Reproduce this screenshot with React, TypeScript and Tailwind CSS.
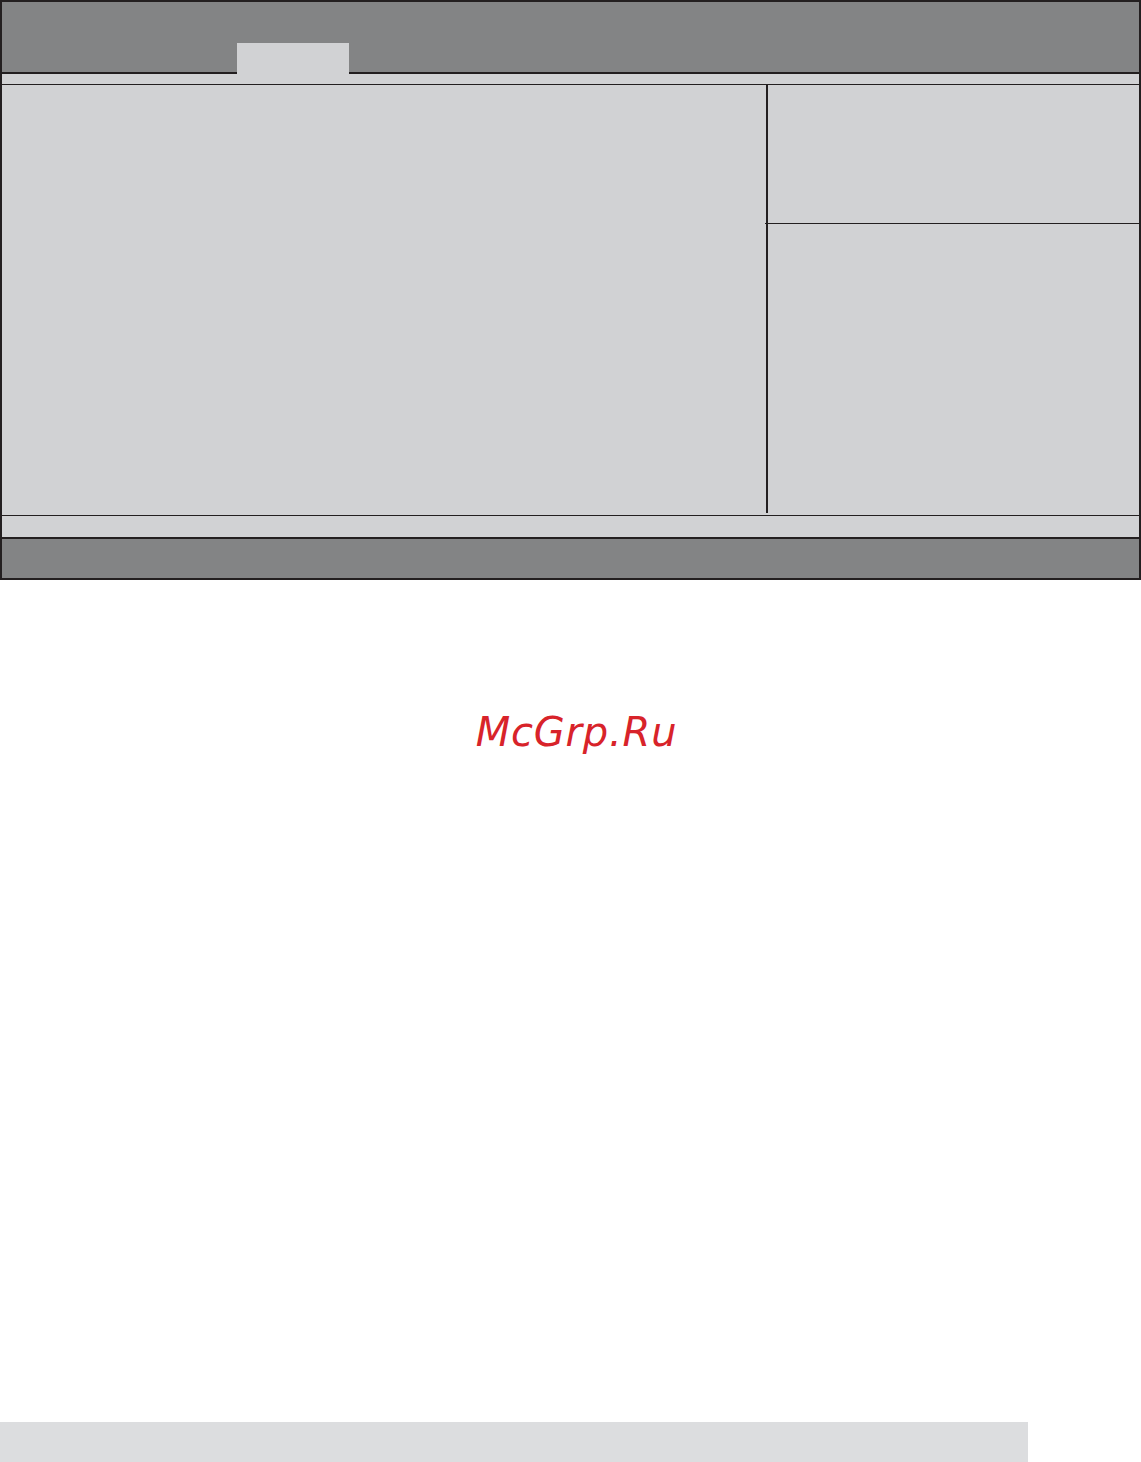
// BIOS setup screen frame (empty template) with watermark and footer bar.
const DARK = 'border-[#231f20]';

function Header() {
    return (
        <div className="flex h-[72px] bg-[#838485]">
            <div className={`w-[235px] border-b-2 ${DARK}`} />
            <div className="self-end h-[31px] w-[112px] bg-[#d1d2d4]" />
            <div className={`flex-1 border-b-2 ${DARK}`} />
        </div>
    );
}

function Body() {
    return (
        <div className="flex h-[430px] bg-[#d1d2d4]">
            <div className="w-[764px]" />
            <div className="w-[2px] h-[428px] bg-[#231f20]" />
            <div className="flex-1 flex flex-col">
                <div className="h-[138px]" />
                <div className="h-px -ml-[3px] bg-[#231f20]" />
                <div className="flex-1" />
            </div>
        </div>
    );
}

export default function App() {
    return (
        <div className="h-[1462px] w-[1141px] flex flex-col bg-white">
            <div className={`h-[580px] border-2 ${DARK} flex flex-col`}>
                <Header />
                <div className="h-[10px] bg-[#d1d2d4]" />
                <div className="h-px bg-[#231f20]" />
                <Body />
                <div className="h-px bg-[#231f20]" />
                <div className="h-[21px] bg-[#d1d2d4]" />
                <div className="h-[2px] bg-[#231f20]" />
                <div className="flex-1 bg-[#838485]" />
            </div>
            <div className="mt-[128px] flex justify-center pl-[12px]">
                <span
                    className="italic text-[40px] leading-[48px] tracking-[0.8px] text-[#d8232a]"
                    style={{ fontFamily: '"DejaVu Sans", sans-serif' }}
                >
                    McGrp.Ru
                </span>
            </div>
            <div className="mt-auto h-[40px] w-[1028px] bg-[#dcdddf]" />
        </div>
    );
}
